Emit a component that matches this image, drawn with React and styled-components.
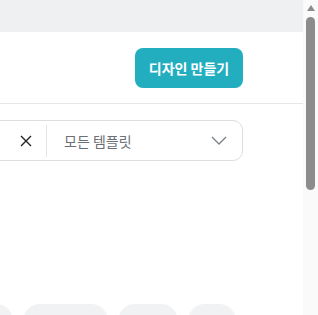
import styled, { createGlobalStyle } from "styled-components"

const GlobalStyle = createGlobalStyle`
body{
    margin: 0;
    font-family: "Noto Sans CJK KR", "Noto Sans", sans-serif;
    background: #fff;
}
`

const Shell = styled.div`
height: 100vh;
display: flex;
overflow: hidden;
`

const Page = styled.div`
flex: 1;
min-width: 0;
overflow: hidden;
`

const Rail = styled.div`
flex: 0 0 15px;
background: #fafafa;
display: flex;
flex-direction: column;
align-items: center;
`

const RailArrow = styled.div`
height: 15px;
display: flex;
justify-content: center;
padding-top: 5px;
box-sizing: border-box;
`

const Thumb = styled.div`
width: 9px;
height: 173px;
margin-top: 2px;
border-radius: 5px;
background: #8c8c8c;
`

const TopBar = styled.div`
height: 32px;
background: #eff0f2;
`

const Header = styled.header`
height: 71px;
display: flex;
align-items: center;
justify-content: flex-end;
padding-right: 60px;
border-bottom: 1px solid #e6e7e9;
`

const CreateButton = styled.button`
width: 108px;
height: 40px;
border: none;
border-radius: 8px;
background: #22aebf;
color: #fff;
font-family: inherit;
font-size: 14px;
font-weight: 700;
cursor: pointer;
`

const Main = styled.main`
padding: 16px 60px 208px 0;
`

const SearchRow = styled.div`
display: flex;
justify-content: flex-end;
`

const SearchBox = styled.div`
flex: 0 0 auto;
width: 420px;
height: 39px;
border: 1px solid #dcdde0;
border-radius: 10px;
display: flex;
align-items: center;
justify-content: flex-end;
`

const ClearButton = styled.span`
width: 20px;
display: flex;
justify-content: center;
color: #222;
margin-right: 10px;
`

const Divider = styled.span`
width: 1px;
height: 32px;
background: #e3e4e6;
`

const Select = styled.div`
width: 195px;
display: flex;
align-items: center;
justify-content: space-between;
padding: 0 15px 0 17px;
box-sizing: border-box;
font-size: 14px;
color: #6b6f76;
`

const Chips = styled.div`
display: flex;
justify-content: flex-end;
gap: 10px;
margin-top: 143px;
margin-right: 7px;
`

const Chip = styled.span`
flex: 0 0 auto;
width: ${({ w }) => w}px;
height: 34px;
border-radius: 17px;
background: #f1f2f4;
font-size: 13px;
color: #333;
display: flex;
justify-content: center;
padding-top: 7px;
box-sizing: border-box;
`

export default function App() {
    return <>
        <GlobalStyle />
        <Shell>
            <Page>
                <TopBar />
                <Header>
                    <CreateButton>디자인 만들기</CreateButton>
                </Header>
                <Main>
                    <SearchRow>
                        <SearchBox>
                            <ClearButton>
                                <svg width="12" height="12" viewBox="0 0 12 12">
                                    <path d="M1 1L11 11M11 1L1 11" stroke="currentColor" strokeWidth="1.4" fill="none" />
                                </svg>
                            </ClearButton>
                            <Divider />
                            <Select>
                                <span>모든 템플릿</span>
                                <svg width="16" height="9" viewBox="0 0 16 9">
                                    <path d="M1 1L8 8L15 1" stroke="#7b7f86" strokeWidth="1.3" fill="none" />
                                </svg>
                            </Select>
                        </SearchBox>
                    </SearchRow>
                    <Chips>
                        <Chip w={70}>비즈니스</Chip>
                        <Chip w={85}>라이프스타일</Chip>
                        <Chip w={60}>패션</Chip>
                        <Chip w={48}>교육</Chip>
                    </Chips>
                </Main>
            </Page>
            <Rail>
                <RailArrow>
                    <svg width="8" height="6" viewBox="0 0 8 6">
                        <path d="M4 0L8 6H0Z" fill="#8c8c8c" />
                    </svg>
                </RailArrow>
                <Thumb />
            </Rail>
        </Shell>
    </>
}
